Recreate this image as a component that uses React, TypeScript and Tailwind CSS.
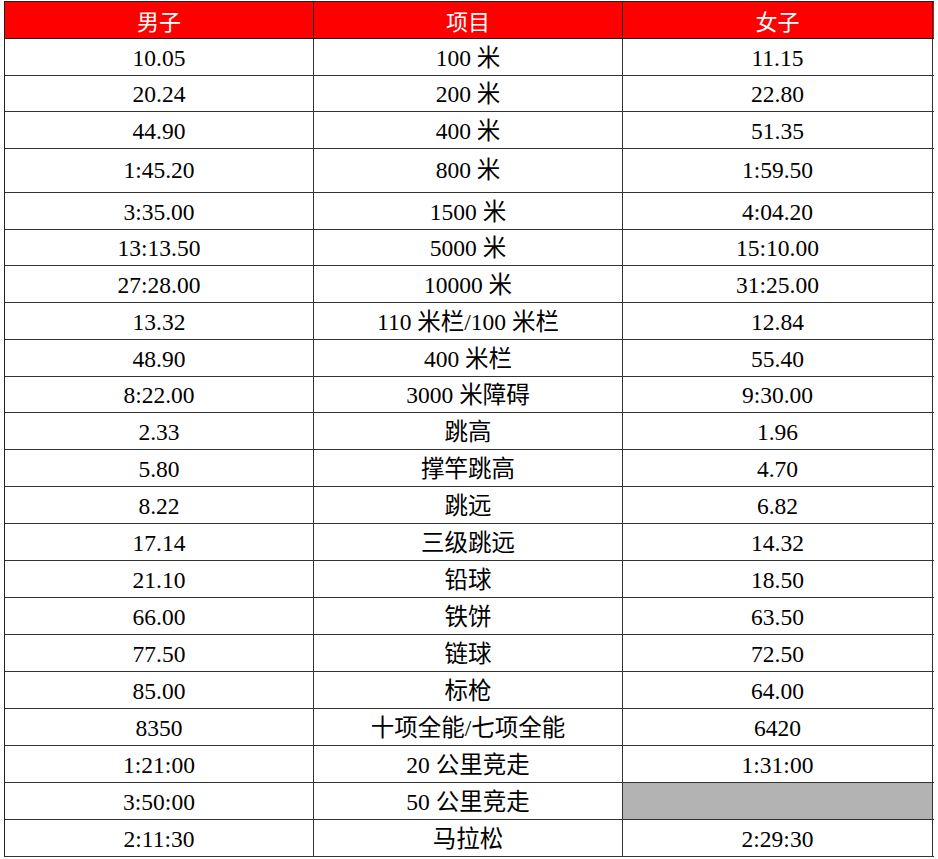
import React from "react";

type Row = { h: string; m: string; e: string; w: string; gray?: boolean; pad: string };

const rows: Row[] = [
  { h: "h-[37px]", pad: "pt-[3px]", m: "10.05", e: "100 米", w: "11.15" },
  { h: "h-[36px]", pad: "pt-[3px]", m: "20.24", e: "200 米", w: "22.80" },
  { h: "h-[37px]", pad: "pt-[3px]", m: "44.90", e: "400 米", w: "51.35" },
  { h: "h-[44px]", pad: "pt-[0px]", m: "1:45.20", e: "800 米", w: "1:59.50" },
  { h: "h-[37px]", pad: "pt-[3px]", m: "3:35.00", e: "1500 米", w: "4:04.20" },
  { h: "h-[36px]", pad: "pt-[3px]", m: "13:13.50", e: "5000 米", w: "15:10.00" },
  { h: "h-[37px]", pad: "pt-[3px]", m: "27:28.00", e: "10000 米", w: "31:25.00" },
  { h: "h-[37px]", pad: "pt-[3px]", m: "13.32", e: "110 米栏/100 米栏", w: "12.84" },
  { h: "h-[37px]", pad: "pt-[3px]", m: "48.90", e: "400 米栏", w: "55.40" },
  { h: "h-[36px]", pad: "pt-[3px]", m: "8:22.00", e: "3000 米障碍", w: "9:30.00" },
  { h: "h-[37px]", pad: "pt-[3px]", m: "2.33", e: "跳高", w: "1.96" },
  { h: "h-[37px]", pad: "pt-[3px]", m: "5.80", e: "撑竿跳高", w: "4.70" },
  { h: "h-[37px]", pad: "pt-[3px]", m: "8.22", e: "跳远", w: "6.82" },
  { h: "h-[37px]", pad: "pt-[3px]", m: "17.14", e: "三级跳远", w: "14.32" },
  { h: "h-[37px]", pad: "pt-[3px]", m: "21.10", e: "铅球", w: "18.50" },
  { h: "h-[37px]", pad: "pt-[3px]", m: "66.00", e: "铁饼", w: "63.50" },
  { h: "h-[37px]", pad: "pt-[3px]", m: "77.50", e: "链球", w: "72.50" },
  { h: "h-[37px]", pad: "pt-[3px]", m: "85.00", e: "标枪", w: "64.00" },
  { h: "h-[37px]", pad: "pt-[3px]", m: "8350", e: "十项全能/七项全能", w: "6420" },
  { h: "h-[37px]", pad: "pt-[3px]", m: "1:21:00", e: "20 公里竞走", w: "1:31:00" },
  { h: "h-[37px]", pad: "pt-[3px]", m: "3:50:00", e: "50 公里竞走", w: "", gray: true },
  { h: "h-[37px]", pad: "pt-[3px]", m: "2:11:30", e: "马拉松", w: "2:29:30" },
];

export default function App() {
  return (
    <div className="bg-white w-[938px] h-[859px] pl-[4px] pt-[1px] font-['Liberation_Serif','Noto_Sans_CJK_SC',serif]">
      <div className="w-[930px] border-l border-t border-[#222]">
        <div className="grid grid-cols-[309px_309px_310px] h-[37px] bg-[#ff0000] text-white text-[22px] border-b border-[#222] font-['Noto_Sans_CJK_SC',sans-serif]">
          <div className="flex items-center justify-center border-r border-[#222] leading-none">男子</div>
          <div className="flex items-center justify-center border-r border-[#222] leading-none">项目</div>
          <div className="flex items-center justify-center border-r border-[#222] leading-none">女子</div>
        </div>
        {rows.map((r, i) => (
          <div key={i} className={`grid grid-cols-[309px_309px_310px] ${r.h} text-[23.5px] text-black border-b border-[#333]`}>
            <div className={`flex items-center justify-center border-r border-[#333] leading-none ${r.pad}`}>{r.m}</div>
            <div className={`flex items-center justify-center border-r border-[#333] leading-none ${r.pad}`}>{r.e}</div>
            <div className={`flex items-center justify-center border-r border-[#333] leading-none ${r.pad} ${r.gray ? "bg-[#b3b3b3]" : ""}`}>{r.w}</div>
          </div>
        ))}
      </div>
    </div>
  );
}
